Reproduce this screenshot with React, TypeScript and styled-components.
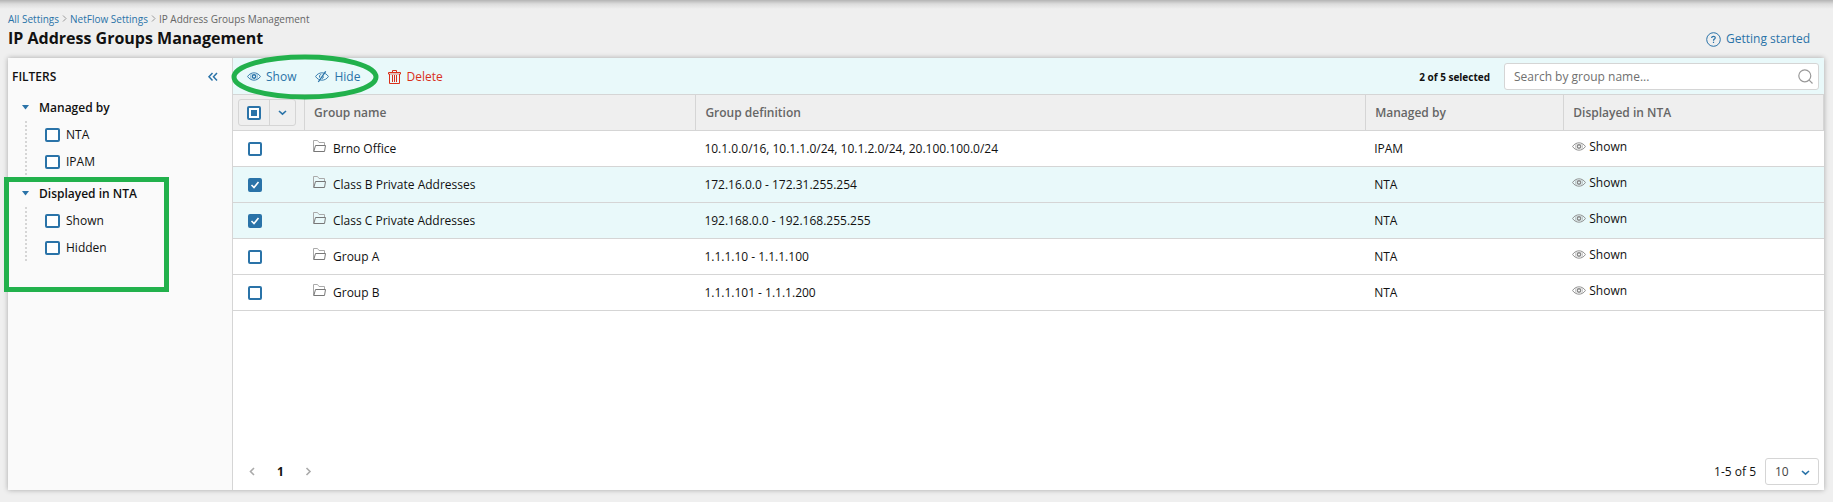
import React, { useEffect, useRef, useState } from 'react';
import styled, { createGlobalStyle } from 'styled-components';

const blue = '#2a73a8';
const line = '#d5d5d5';
const green = '#22b14c';
const selectedBg = '#e9f9fa';

const GlobalStyle = createGlobalStyle`
  *, *::before, *::after { box-sizing: border-box; }
  body {
    margin: 0;
    background: #efefef;
    color: #111;
    font-family: 'Open Sans', sans-serif;
    font-size: 12px;
    line-height: 18px;
  }
  button, input, select { font: inherit; color: inherit; margin: 0; }
  button { cursor: pointer; }
  a { color: ${blue}; text-decoration: none; }
`;

const Page = styled.div`
  min-height: 100vh;
  display: flex;
  flex-direction: column;
  padding: 0 9px 12px 8px;
  background: linear-gradient(#b4b4b4, #dcdcdc 4px, #efefef 9px);
`;

const PageHeader = styled.header`
  display: flex;
  justify-content: space-between;
  align-items: flex-end;
  height: 58px;
  padding: 0 14px 8px 0;
`;

const Breadcrumbs = styled.nav`
  display: flex;
  align-items: center;
  gap: 3px;
  font-size: 10px;
  line-height: 14px;
  color: #666;
`;

const Title = styled.h1`
  margin: 0;
  font-size: 16px;
  line-height: 24px;
  font-weight: 700;
`;

const HelpLink = styled.a`
  display: flex;
  align-items: center;
  gap: 5px;
  padding-bottom: 2px;
`;

const Panel = styled.div`
  flex: 1;
  display: flex;
  background: #fff;
  box-shadow: 0 0 5px rgba(0, 0, 0, 0.3);
`;

const Sidebar = styled.aside`
  flex: 0 0 225px;
  background: #fafafa;
  border-right: 1px solid ${line};
`;

const SidebarHeader = styled.div`
  display: flex;
  justify-content: space-between;
  align-items: center;
  height: 36px;
  padding: 1px 13px 0 4px;
`;

const SidebarTitle = styled.h2`
  margin: 0;
  font-size: 12px;
  font-weight: 600;
`;

const PlainButton = styled.button`
  display: inline-flex;
  align-items: center;
  padding: 0;
  border: 0;
  background: none;
`;

const FilterGroup = styled.section`
  position: relative;
  margin-bottom: 5px;
`;

const FilterTitle = styled(PlainButton)`
  gap: 10px;
  height: 27px;
  padding-left: 14px;
  font-weight: 600;
`;

const FilterOptions = styled.div`
  margin-left: 17px;
  padding-left: 18px;
  border-left: 2px dotted #d5d5d5;
`;

const FilterOption = styled.label`
  display: flex;
  align-items: center;
  gap: 6px;
  height: 27px;
`;

const CheckInput = styled.input<{ $wide?: boolean }>`
  appearance: none;
  display: block;
  flex: none;
  width: ${(p) => (p.$wide ? 15 : 14)}px;
  height: 14px;
  border: 2px solid ${blue};
  border-radius: 2px;
  background: #fff;
  &:checked { background-color: ${blue}; }
  &:indeterminate { box-shadow: inset 0 0 0 2px #fff; background-color: ${blue}; }
`;

const CheckWrap = styled.span`
  position: relative;
  display: inline-flex;
  vertical-align: middle;
  svg { position: absolute; inset: 0; pointer-events: none; }
`;

const Content = styled.main`
  flex: 1;
  min-width: 0;
  display: flex;
  flex-direction: column;
`;

const Toolbar = styled.div`
  display: flex;
  align-items: center;
  height: 36px;
  padding-right: 5px;
  background: ${selectedBg};
`;

const Marked = styled.div`
  position: relative;
  display: flex;
  gap: 19px;
  padding: 0 28px 0 14px;
`;

const EllipseMark = styled.svg`
  position: absolute;
  left: -2px;
  top: -12px;
  pointer-events: none;
`;

const RectMark = styled.div`
  position: absolute;
  left: -4px;
  top: -3px;
  width: 165px;
  height: 115px;
  border: 5px solid ${green};
  pointer-events: none;
`;

const ToolButton = styled(PlainButton)<{ $danger?: boolean }>`
  gap: 5px;
  padding-top: 2px;
  color: ${(p) => (p.$danger ? '#d9301a' : blue)};
`;

const SelectionCount = styled.strong`
  margin-left: auto;
  margin-right: 14px;
  padding-top: 2px;
  font-size: 10px;
  font-weight: 700;
`;

const SearchBox = styled.label`
  display: flex;
  align-items: center;
  width: 315px;
  height: 27px;
  padding: 0 5px 0 9px;
  border: 1px solid ${line};
  border-radius: 3px;
  background: #fff;
`;

const SearchInput = styled.input`
  flex: 1;
  min-width: 0;
  padding: 2px 0 0;
  border: 0;
  outline: 0;
  background: none;
  &::placeholder { color: #707070; opacity: 1; }
`;

const Table = styled.table`
  width: 100%;
  table-layout: fixed;
  border-collapse: separate;
  border-spacing: 0;
`;

const HeadCell = styled.th<{ $first?: boolean }>`
  height: 37px;
  padding: 0 0 0 ${(p) => (p.$first ? 5 : 9)}px;
  border: solid ${line};
  border-width: 1px 1px 1px 0;
  background: #efefef;
  color: #666;
  text-align: left;
  font-weight: 600;
`;

const Row = styled.tr<{ $selected: boolean }>`
  background: ${(p) => (p.$selected ? selectedBg : '#fff')};
`;

const Cell = styled.td<{ $check?: boolean; $raised?: boolean }>`
  height: 36px;
  padding: 0 0 ${(p) => (p.$raised ? 3 : 0)}px ${(p) => (p.$check ? 15 : 8)}px;
  border-bottom: 1px solid ${line};
`;

const IconText = styled.span<{ $gap: number }>`
  display: flex;
  align-items: center;
  gap: ${(p) => p.$gap}px;
`;

const GroupIcon = styled.svg`
  margin-bottom: 5px;
`;

const SplitButton = styled.div`
  display: inline-flex;
  height: 27px;
  border: 1px solid ${line};
  border-radius: 3px;
  vertical-align: middle;
`;

const SplitPart = styled.span<{ $last?: boolean }>`
  display: flex;
  align-items: center;
  justify-content: center;
  width: ${(p) => (p.$last ? 25 : 31)}px;
  border-right: ${(p) => (p.$last ? '0' : `1px solid ${line}`)};
`;

const Footer = styled.footer`
  display: flex;
  align-items: center;
  justify-content: space-between;
  margin-top: auto;
  padding: 0 5px 5px 15px;
`;

const Pager = styled.nav`
  display: flex;
  align-items: center;
  gap: 20px;
`;

const PageSize = styled.label`
  display: flex;
  align-items: center;
  gap: 9px;
`;

const SelectWrap = styled.span`
  position: relative;
  display: inline-flex;
  svg { position: absolute; right: 9px; top: 10px; pointer-events: none; }
`;

const SizeSelect = styled.select`
  appearance: none;
  width: 54px;
  height: 27px;
  padding: 0 0 0 9px;
  border: 1px solid ${line};
  border-radius: 3px;
  background: #fff;
  color: #444;
`;

const chevronPaths = {
  down: 'M1 3L4.500 6.200L8 3',
  left: 'M6 1L2.500 4.500L6 8',
  right: 'M2.500 1L6 4.500L2.500 8',
};

const Chevron = ({ d = 'down', color = blue }: { d?: keyof typeof chevronPaths; color?: string }) => (
  <svg width="9" height="9" viewBox="0 0 9 9" fill="none" stroke={color} strokeWidth="1.600">
    <path d={chevronPaths[d]} />
  </svg>
);

const Crumb = () => (
  <svg width="5" height="8" viewBox="0 0 5 8" fill="none" stroke="#999">
    <path d="M1 .5L4 3.500L1 6.500" />
  </svg>
);

const Eye = ({ color = blue, slash = false }: { color?: string; slash?: boolean }) => (
  <svg width="14" height="12" viewBox="0 0 14 12" fill="none" stroke={color}>
    <path d="M.6 5.500C3.600 .6 10.400 .6 13.400 5.500C10.400 10.400 3.600 10.400 .6 5.500z" strokeWidth=".9" />
    {slash ? (
      <>
        <path d="M6 3.200Q4.300 4 4.500 6.500M8.500 5.500Q8.500 7 7 7.500" strokeWidth="1" />
        <path d="M10.700 .3L3.300 11" strokeWidth="1.300" />
      </>
    ) : (
      <>
        <path d="M4.200 2.600Q2.800 5.500 4.200 8.400M9.800 2.600Q11.200 5.500 9.800 8.400" strokeWidth=".5" />
        <circle cx="7" cy="5.500" r="1.700" strokeWidth="1.400" />
      </>
    )}
  </svg>
);

const Trash = () => (
  <svg width="13" height="14" viewBox="0 0 13 14" fill="none" stroke="#d9301a">
    <path d="M.5 4V2.500H12.500V4M4.500 2.500V.5H8.500V2.500M1.500 4V13.500H11.500V4M4.500 5V12M6.500 5V12M8.500 5V12" />
    <path d="M0 4H13" strokeWidth=".6" />
  </svg>
);

const Folder = () => (
  <GroupIcon width="13" height="12" viewBox="0 0 13 12" fill="none">
    <path d="M.5 11.500V.5H4.500L6 2.500H11.500V5" stroke="#aaa" />
    <path d="M2.500 5.500H12.500L11.500 11.500H.8L2.500 5.500z" stroke="#777" />
  </GroupIcon>
);

type CheckProps = {
  label?: string;
  checked?: boolean;
  indeterminate?: boolean;
  wide?: boolean;
  onChange?: () => void;
};

const Check = ({ label, checked = false, indeterminate = false, wide, onChange }: CheckProps) => {
  const ref = useRef<HTMLInputElement>(null);
  useEffect(() => {
    if (ref.current) ref.current.indeterminate = indeterminate;
  }, [indeterminate]);
  return (
    <CheckWrap>
      <CheckInput ref={ref} type="checkbox" $wide={wide} aria-label={label} checked={checked} onChange={onChange} />
      {checked && !indeterminate && (
        <svg width="14" height="14" viewBox="0 0 14 14" fill="none" stroke="#fff" strokeWidth="1.600">
          <path d="M3.500 7L6 9.500L10.500 4" />
        </svg>
      )}
    </CheckWrap>
  );
};

const filters = [
  { title: 'Managed by', options: ['NTA', 'IPAM'], marked: false },
  { title: 'Displayed in NTA', options: ['Shown', 'Hidden'], marked: true },
];

const groups = [
  { name: 'Brno Office', definition: '10.1.0.0/16, 10.1.1.0/24, 10.1.2.0/24, 20.100.100.0/24', managedBy: 'IPAM' },
  { name: 'Class B Private Addresses', definition: '172.16.0.0 - 172.31.255.254', managedBy: 'NTA' },
  { name: 'Class C Private Addresses', definition: '192.168.0.0 - 192.168.255.255', managedBy: 'NTA' },
  { name: 'Group A', definition: '1.1.1.10 - 1.1.1.100', managedBy: 'NTA' },
  { name: 'Group B', definition: '1.1.1.101 - 1.1.1.200', managedBy: 'NTA' },
];

const Col = styled.col<{ $width?: string }>`
  width: ${(p) => p.$width ?? 'auto'};
`;

export default function App() {
  const [selected, setSelected] = useState<number[]>([1, 2]);
  const [active, setActive] = useState<string[]>([]);
  const toggle = (i: number) => setSelected((s) => (s.includes(i) ? s.filter((x) => x !== i) : [...s, i]));
  const toggleFilter = (k: string) => setActive((s) => (s.includes(k) ? s.filter((x) => x !== k) : [...s, k]));
  const all = selected.length === groups.length;

  return (
    <Page>
      <GlobalStyle />
      <PageHeader>
        <div>
          <Breadcrumbs aria-label="Breadcrumb">
            <a href="#settings">All Settings</a>
            <Crumb />
            <a href="#netflow">NetFlow Settings</a>
            <Crumb />
            <span>IP Address Groups Management</span>
          </Breadcrumbs>
          <Title>IP Address Groups Management</Title>
        </div>
        <HelpLink href="#help">
          <svg width="15" height="15" viewBox="0 0 15 15" fill="none" stroke={blue}>
            <circle cx="7.500" cy="7.500" r="6.800" />
            <path d="M5.700 6V5.600Q5.800 4.300 7.500 4.300T9.300 5.800Q9.300 6.600 8.300 7.100Q7.500 7.500 7.500 8.700M7.500 9.700V11" strokeWidth="1.200" />
          </svg>
          Getting started
        </HelpLink>
      </PageHeader>

      <Panel>
        <Sidebar>
          <SidebarHeader>
            <SidebarTitle>FILTERS</SidebarTitle>
            <PlainButton type="button" aria-label="Collapse filters">
              <svg width="12" height="10" viewBox="0 0 12 10" fill="none" stroke={blue} strokeWidth="1.500">
                <path d="M5.500 1L2 4.800L5.500 8.500M10 1L6.500 4.800L10 8.500" />
              </svg>
            </PlainButton>
          </SidebarHeader>
          {filters.map((f) => (
            <FilterGroup key={f.title}>
              <FilterTitle type="button">
                <svg width="7" height="5" viewBox="0 0 7 5" fill={blue}>
                  <path d="M0 0H7L3.500 4.500z" />
                </svg>
                {f.title}
              </FilterTitle>
              <FilterOptions>
                {f.options.map((o) => (
                  <FilterOption key={o}>
                    <Check wide checked={active.includes(o)} onChange={() => toggleFilter(o)} />
                    {o}
                  </FilterOption>
                ))}
              </FilterOptions>
              {f.marked && <RectMark />}
            </FilterGroup>
          ))}
        </Sidebar>

        <Content>
          <Toolbar>
            <Marked>
              <ToolButton type="button"><Eye />Show</ToolButton>
              <ToolButton type="button"><Eye slash />Hide</ToolButton>
              <EllipseMark width="148" height="46" viewBox="0 0 148 46" fill="none" stroke={green} strokeWidth="5">
                <ellipse cx="74" cy="23" rx="71" ry="20" />
              </EllipseMark>
            </Marked>
            <ToolButton type="button" $danger><Trash />Delete</ToolButton>
            <SelectionCount>{selected.length} of {groups.length} selected</SelectionCount>
            <SearchBox>
              <SearchInput type="text" aria-label="Search by group name" placeholder="Search by group name..." />
              <svg width="15" height="15" viewBox="0 0 15 15" fill="none" stroke="#999" strokeWidth="1.200">
                <circle cx="6.800" cy="6.800" r="6" />
                <path d="M11.200 11.200L14.500 14.500" />
              </svg>
            </SearchBox>
          </Toolbar>

          <Table>
            <colgroup>
              <Col $width="72px" />
              <Col $width="24.6%" />
              <Col $width="42.1%" />
              <Col $width="12.45%" />
              <Col />
            </colgroup>
            <thead>
              <tr>
                <HeadCell $first scope="col">
                  <SplitButton>
                    <SplitPart>
                      <Check
                        label="Select all"
                        checked={all}
                        indeterminate={!all && selected.length > 0}
                        onChange={() => setSelected(all ? [] : groups.map((_, i) => i))}
                      />
                    </SplitPart>
                    <SplitPart as={PlainButton} $last type="button" aria-label="Selection options"><Chevron /></SplitPart>
                  </SplitButton>
                </HeadCell>
                <HeadCell scope="col">Group name</HeadCell>
                <HeadCell scope="col">Group definition</HeadCell>
                <HeadCell scope="col">Managed by</HeadCell>
                <HeadCell scope="col">Displayed in NTA</HeadCell>
              </tr>
            </thead>
            <tbody>
              {groups.map((g, i) => (
                <Row key={g.name} $selected={selected.includes(i)}>
                  <Cell $check>
                    <Check label={`Select ${g.name}`} checked={selected.includes(i)} onChange={() => toggle(i)} />
                  </Cell>
                  <Cell><IconText $gap={7}><Folder />{g.name}</IconText></Cell>
                  <Cell>{g.definition}</Cell>
                  <Cell>{g.managedBy}</Cell>
                  <Cell $raised><IconText $gap={3}><Eye color="#888" />Shown</IconText></Cell>
                </Row>
              ))}
            </tbody>
          </Table>

          <Footer>
            <Pager aria-label="Pages">
              <PlainButton type="button" aria-label="Previous page"><Chevron d="left" color="#aaa" /></PlainButton>
              <strong>1</strong>
              <PlainButton type="button" aria-label="Next page"><Chevron d="right" color="#aaa" /></PlainButton>
            </Pager>
            <PageSize>
              1-5 of 5
              <SelectWrap>
                <SizeSelect aria-label="Rows per page" defaultValue="10">
                  <option>10</option>
                  <option>20</option>
                  <option>50</option>
                </SizeSelect>
                <Chevron />
              </SelectWrap>
            </PageSize>
          </Footer>
        </Content>
      </Panel>
    </Page>
  );
}
